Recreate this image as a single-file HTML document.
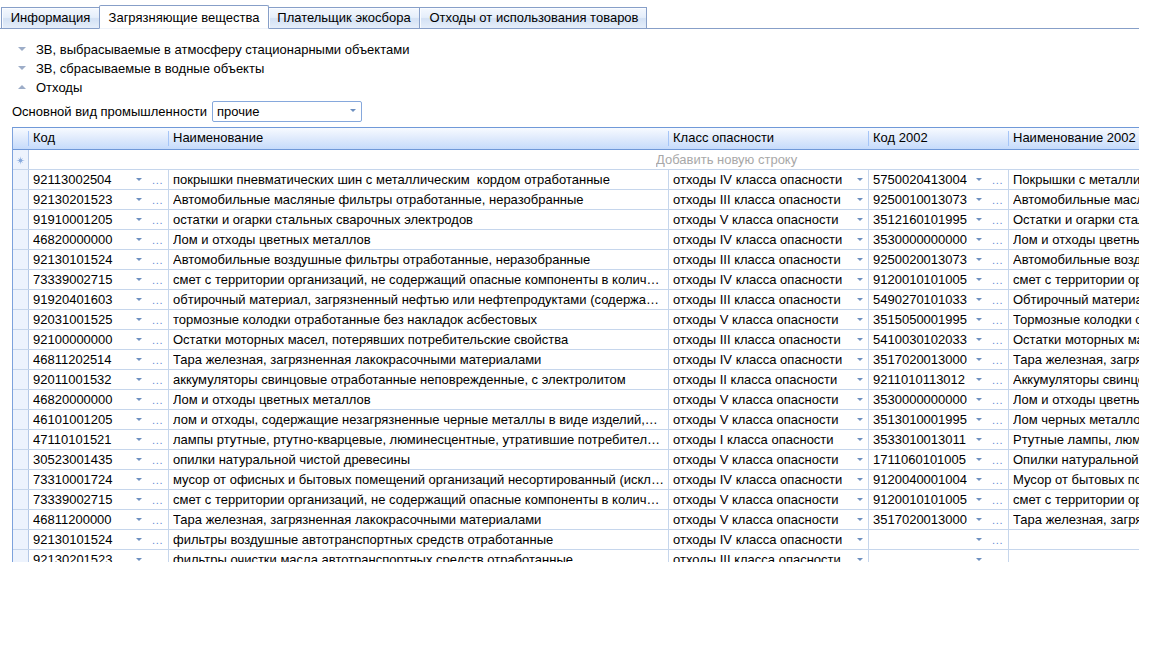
<!DOCTYPE html>
<html lang="ru"><head><meta charset="utf-8"><title>Загрязняющие вещества</title>
<style>
html,body{margin:0;padding:0;background:#fff;}
body{width:1152px;height:648px;overflow:hidden;position:relative;font-family:"Liberation Sans",Arial,sans-serif;font-size:12px;color:#000;}
.abs{position:absolute;}
.s{display:inline-block;line-height:15px;transform:scaleY(1.045);transform-origin:0 12px;}
#tabline{left:0px;top:28px;width:1139px;height:1px;background:#879fc8;}
.tab{position:absolute;top:7px;height:21px;box-sizing:border-box;border:1px solid #879fc8;border-bottom:none;background:linear-gradient(#f4f8fe 0%,#e5eefa 47%,#d3e1f4 53%,#e5eefa 100%);box-shadow:inset 1px 1px 0 #fafcff;line-height:19px;text-align:center;white-space:nowrap;font-size:13px;}
.tab.sel{box-shadow:none;top:5px;height:24px;background:#fff;line-height:24px;border-bottom:1px solid #eef2f9;border-radius:2px 2px 0 0;}
.exp{position:absolute;left:36px;white-space:nowrap;line-height:14px;font-size:13px;}
.tri{position:absolute;left:18px;width:0;height:0;border-left:4px solid transparent;border-right:4px solid transparent;}
.tri.dn{border-top:4px solid #9dadc8;}
.tri.up{border-bottom:4px solid #9dadc8;}
#lbl{left:12px;top:104px;line-height:14px;font-size:13px;white-space:nowrap;}
#combo{left:212px;top:101px;width:150px;height:21px;box-sizing:border-box;border:1px solid #86a8dc;border-radius:2px;background:#fff;line-height:19px;padding-left:4px;font-size:13px;}
#combo i{position:absolute;right:5px;top:7px;width:0;height:0;border-left:3px solid transparent;border-right:3px solid transparent;border-top:3px solid #6d8fc0;}
#grid{left:12px;top:127px;width:1127px;height:435px;overflow:hidden;border-left:1px solid #7da2dc;border-top:1px solid #7099d8;box-sizing:border-box;}
.hdr{position:relative;height:21px;background:linear-gradient(#f7faff 0%,#dfeafc 50%,#c5dbfb 100%);border-bottom:1px solid #6f98d8;font-size:13px;}
.hdr .h{position:absolute;top:-1px;height:21px;line-height:21px;white-space:nowrap;}
.hdr .sep{position:absolute;top:3px;height:15px;width:1px;background:#a5c5f7;}
.r{position:relative;height:20px;box-sizing:border-box;border-bottom:1px solid #c6d6ec;white-space:nowrap;}
.c{position:absolute;top:0;height:19px;box-sizing:border-box;border-right:1px solid #c6d6ec;overflow:hidden;line-height:19px;font-size:13px;}
.c0{left:0;width:16px;background:#edf3fd;border-right:1px solid #b4c8e6;}
.c1{left:16px;width:140px;}
.c2{left:156px;width:500px;}
.c3{left:656px;width:200px;}
.c4{left:856px;width:140px;}
.c5{left:996px;width:140px;border-right:none;}
.t{transform:scaleY(1.045);transform-origin:0 14px;position:absolute;left:4px;top:0;overflow:hidden;text-overflow:ellipsis;white-space:nowrap;}
.c1 .t{width:100px}
.c2 .t{width:494px;text-overflow:clip}
.c3 .t{width:180px}
.c4 .t{width:100px}
.c5 .t{width:200px;text-overflow:clip}
.a{position:absolute;top:8px;width:0;height:0;border-left:3px solid transparent;border-right:3px solid transparent;border-top:3px solid #6d8fc0;}
.c1 .a{left:107px}
.c3 .a{left:188px}
.c4 .a{left:107px}
.d{position:absolute;top:1px;font-weight:normal;color:#6489d2;font-size:11px;letter-spacing:.65px;}
.c1 .d{left:123px}
.c4 .d{left:123px}
.newrow{position:relative;height:20px;box-sizing:border-box;border-bottom:1px solid #c6d6ec;}
.newrow .c0{height:19px;color:#8aa4cf;font-size:11px;text-align:center;line-height:22px;}
.newrow .txt{position:absolute;left:643px;top:0;line-height:20px;color:#a8a8a8;font-size:13px;white-space:nowrap;}
</style></head><body>
<div class="abs" id="tabline"></div>
<div class="tab" style="left:1px;width:99px;"><span class="s">Информация</span></div>
<div class="tab" style="left:268px;width:152px;"><span class="s">Плательщик экосбора</span></div>
<div class="tab" style="left:419px;width:228px;padding-left:2px;"><span class="s">Отходы от использования товаров</span></div>
<div class="tab sel" style="left:99px;width:170px;"><span class="s">Загрязняющие вещества</span></div>

<div class="tri dn" style="top:47px;"></div><div class="exp" style="top:42px;"><span class="s">ЗВ, выбрасываемые в атмосферу стационарными объектами</span></div>
<div class="tri dn" style="top:66px;"></div><div class="exp" style="top:61px;"><span class="s">ЗВ, сбрасываемые в водные объекты</span></div>
<div class="tri up" style="top:85px;"></div><div class="exp" style="top:80px;"><span class="s">Отходы</span></div>

<div class="abs" id="lbl"><span class="s">Основной вид промышленности</span></div>
<div class="abs" id="combo"><span class="s">прочие</span><i></i></div>

<div class="abs" id="grid">
<div class="hdr">
<div class="sep" style="left:15px"></div><div class="h" style="left:20px"><span class="s">Код</span></div>
<div class="sep" style="left:155px"></div><div class="h" style="left:160px"><span class="s">Наименование</span></div>
<div class="sep" style="left:655px"></div><div class="h" style="left:660px"><span class="s">Класс опасности</span></div>
<div class="sep" style="left:855px"></div><div class="h" style="left:860px"><span class="s">Код 2002</span></div>
<div class="sep" style="left:995px"></div><div class="h" style="left:1000px"><span class="s">Наименование 2002</span></div>
</div>
<div class="newrow"><div class="c c0"><svg width="11" height="11" viewBox="0 0 11 11" style="position:absolute;left:2px;top:5px"><polygon fill="#86a8dc" points="5.50,1.20 5.98,4.35 7.90,3.10 6.65,5.02 9.80,5.50 6.65,5.98 7.90,7.90 5.98,6.65 5.50,9.80 5.02,6.65 3.10,7.90 4.35,5.98 1.20,5.50 4.35,5.02 3.10,3.10 5.02,4.35"/></svg></div><div class="txt"><span class="s">Добавить новую строку</span></div></div>
<div class="r"><div class="c c0"></div><div class="c c1"><span class="t">92113002504</span><i class="a"></i><b class="d">...</b></div><div class="c c2"><span class="t">покрышки пневматических шин с металлическим&nbsp; кордом отработанные</span></div><div class="c c3"><span class="t">отходы IV класса опасности</span><i class="a"></i></div><div class="c c4"><span class="t">5750020413004</span><i class="a"></i><b class="d">...</b></div><div class="c c5"><span class="t">Покрышки с металлическим кордом отработанные</span></div></div>
<div class="r"><div class="c c0"></div><div class="c c1"><span class="t">92130201523</span><i class="a"></i><b class="d">...</b></div><div class="c c2"><span class="t">Автомобильные масляные фильтры отработанные, неразобранные</span></div><div class="c c3"><span class="t">отходы III класса опасности</span><i class="a"></i></div><div class="c c4"><span class="t">9250010013073</span><i class="a"></i><b class="d">...</b></div><div class="c c5"><span class="t">Автомобильные масляные фильтры отработанные</span></div></div>
<div class="r"><div class="c c0"></div><div class="c c1"><span class="t">91910001205</span><i class="a"></i><b class="d">...</b></div><div class="c c2"><span class="t">остатки и огарки стальных сварочных электродов</span></div><div class="c c3"><span class="t">отходы V класса опасности</span><i class="a"></i></div><div class="c c4"><span class="t">3512160101995</span><i class="a"></i><b class="d">...</b></div><div class="c c5"><span class="t">Остатки и огарки стальных сварочных электродов</span></div></div>
<div class="r"><div class="c c0"></div><div class="c c1"><span class="t">46820000000</span><i class="a"></i><b class="d">...</b></div><div class="c c2"><span class="t">Лом и отходы цветных металлов</span></div><div class="c c3"><span class="t">отходы IV класса опасности</span><i class="a"></i></div><div class="c c4"><span class="t">3530000000000</span><i class="a"></i><b class="d">...</b></div><div class="c c5"><span class="t">Лом и отходы цветных металлов</span></div></div>
<div class="r"><div class="c c0"></div><div class="c c1"><span class="t">92130101524</span><i class="a"></i><b class="d">...</b></div><div class="c c2"><span class="t">Автомобильные воздушные фильтры отработанные, неразобранные</span></div><div class="c c3"><span class="t">отходы III класса опасности</span><i class="a"></i></div><div class="c c4"><span class="t">9250020013073</span><i class="a"></i><b class="d">...</b></div><div class="c c5"><span class="t">Автомобильные воздушные фильтры отработанные</span></div></div>
<div class="r"><div class="c c0"></div><div class="c c1"><span class="t">73339002715</span><i class="a"></i><b class="d">...</b></div><div class="c c2"><span class="t">смет с территории организаций, не содержащий опасные компоненты в колич…</span></div><div class="c c3"><span class="t">отходы IV класса опасности</span><i class="a"></i></div><div class="c c4"><span class="t">9120010101005</span><i class="a"></i><b class="d">...</b></div><div class="c c5"><span class="t">смет с территории организаций</span></div></div>
<div class="r"><div class="c c0"></div><div class="c c1"><span class="t">91920401603</span><i class="a"></i><b class="d">...</b></div><div class="c c2"><span class="t">обтирочный материал, загрязненный нефтью или нефтепродуктами (содержа…</span></div><div class="c c3"><span class="t">отходы III класса опасности</span><i class="a"></i></div><div class="c c4"><span class="t">5490270101033</span><i class="a"></i><b class="d">...</b></div><div class="c c5"><span class="t">Обтирочный материал, загрязненный маслами</span></div></div>
<div class="r"><div class="c c0"></div><div class="c c1"><span class="t">92031001525</span><i class="a"></i><b class="d">...</b></div><div class="c c2"><span class="t">тормозные колодки отработанные без накладок асбестовых</span></div><div class="c c3"><span class="t">отходы V класса опасности</span><i class="a"></i></div><div class="c c4"><span class="t">3515050001995</span><i class="a"></i><b class="d">...</b></div><div class="c c5"><span class="t">Тормозные колодки отработанные</span></div></div>
<div class="r"><div class="c c0"></div><div class="c c1"><span class="t">92100000000</span><i class="a"></i><b class="d">...</b></div><div class="c c2"><span class="t">Остатки моторных масел, потерявших потребительские свойства</span></div><div class="c c3"><span class="t">отходы III класса опасности</span><i class="a"></i></div><div class="c c4"><span class="t">5410030102033</span><i class="a"></i><b class="d">...</b></div><div class="c c5"><span class="t">Остатки моторных масел</span></div></div>
<div class="r"><div class="c c0"></div><div class="c c1"><span class="t">46811202514</span><i class="a"></i><b class="d">...</b></div><div class="c c2"><span class="t">Тара железная, загрязненная лакокрасочными материалами</span></div><div class="c c3"><span class="t">отходы IV класса опасности</span><i class="a"></i></div><div class="c c4"><span class="t">3517020013000</span><i class="a"></i><b class="d">...</b></div><div class="c c5"><span class="t">Тара железная, загрязненная</span></div></div>
<div class="r"><div class="c c0"></div><div class="c c1"><span class="t">92011001532</span><i class="a"></i><b class="d">...</b></div><div class="c c2"><span class="t">аккумуляторы свинцовые отработанные неповрежденные, с электролитом</span></div><div class="c c3"><span class="t">отходы II класса опасности</span><i class="a"></i></div><div class="c c4"><span class="t">9211010113012</span><i class="a"></i><b class="d">...</b></div><div class="c c5"><span class="t">Аккумуляторы свинцовые отработанные</span></div></div>
<div class="r"><div class="c c0"></div><div class="c c1"><span class="t">46820000000</span><i class="a"></i><b class="d">...</b></div><div class="c c2"><span class="t">Лом и отходы цветных металлов</span></div><div class="c c3"><span class="t">отходы V класса опасности</span><i class="a"></i></div><div class="c c4"><span class="t">3530000000000</span><i class="a"></i><b class="d">...</b></div><div class="c c5"><span class="t">Лом и отходы цветных металлов</span></div></div>
<div class="r"><div class="c c0"></div><div class="c c1"><span class="t">46101001205</span><i class="a"></i><b class="d">...</b></div><div class="c c2"><span class="t">лом и отходы, содержащие незагрязненные черные металлы в виде изделий,…</span></div><div class="c c3"><span class="t">отходы V класса опасности</span><i class="a"></i></div><div class="c c4"><span class="t">3513010001995</span><i class="a"></i><b class="d">...</b></div><div class="c c5"><span class="t">Лом черных металлов несортированный</span></div></div>
<div class="r"><div class="c c0"></div><div class="c c1"><span class="t">47110101521</span><i class="a"></i><b class="d">...</b></div><div class="c c2"><span class="t">лампы ртутные, ртутно-кварцевые, люминесцентные, утратившие потребител…</span></div><div class="c c3"><span class="t">отходы I класса опасности</span><i class="a"></i></div><div class="c c4"><span class="t">3533010013011</span><i class="a"></i><b class="d">...</b></div><div class="c c5"><span class="t">Ртутные лампы, люминесцентные</span></div></div>
<div class="r"><div class="c c0"></div><div class="c c1"><span class="t">30523001435</span><i class="a"></i><b class="d">...</b></div><div class="c c2"><span class="t">опилки натуральной чистой древесины</span></div><div class="c c3"><span class="t">отходы V класса опасности</span><i class="a"></i></div><div class="c c4"><span class="t">1711060101005</span><i class="a"></i><b class="d">...</b></div><div class="c c5"><span class="t">Опилки натуральной чистой древесины</span></div></div>
<div class="r"><div class="c c0"></div><div class="c c1"><span class="t">73310001724</span><i class="a"></i><b class="d">...</b></div><div class="c c2"><span class="t">мусор от офисных и бытовых помещений организаций несортированный (искл…</span></div><div class="c c3"><span class="t">отходы IV класса опасности</span><i class="a"></i></div><div class="c c4"><span class="t">9120040001004</span><i class="a"></i><b class="d">...</b></div><div class="c c5"><span class="t">Мусор от бытовых помещений организаций</span></div></div>
<div class="r"><div class="c c0"></div><div class="c c1"><span class="t">73339002715</span><i class="a"></i><b class="d">...</b></div><div class="c c2"><span class="t">смет с территории организаций, не содержащий опасные компоненты в колич…</span></div><div class="c c3"><span class="t">отходы V класса опасности</span><i class="a"></i></div><div class="c c4"><span class="t">9120010101005</span><i class="a"></i><b class="d">...</b></div><div class="c c5"><span class="t">смет с территории организаций</span></div></div>
<div class="r"><div class="c c0"></div><div class="c c1"><span class="t">46811200000</span><i class="a"></i><b class="d">...</b></div><div class="c c2"><span class="t">Тара железная, загрязненная лакокрасочными материалами</span></div><div class="c c3"><span class="t">отходы V класса опасности</span><i class="a"></i></div><div class="c c4"><span class="t">3517020013000</span><i class="a"></i><b class="d">...</b></div><div class="c c5"><span class="t">Тара железная, загрязненная</span></div></div>
<div class="r"><div class="c c0"></div><div class="c c1"><span class="t">92130101524</span><i class="a"></i><b class="d">...</b></div><div class="c c2"><span class="t">фильтры воздушные автотранспортных средств отработанные</span></div><div class="c c3"><span class="t">отходы IV класса опасности</span><i class="a"></i></div><div class="c c4"><span class="t"></span><i class="a"></i><b class="d">...</b></div><div class="c c5"><span class="t"></span></div></div>
<div class="r"><div class="c c0"></div><div class="c c1"><span class="t">92130201523</span><i class="a"></i><b class="d">...</b></div><div class="c c2"><span class="t">фильтры очистки масла автотранспортных средств отработанные</span></div><div class="c c3"><span class="t">отходы III класса опасности</span><i class="a"></i></div><div class="c c4"><span class="t"></span><i class="a"></i><b class="d">...</b></div><div class="c c5"><span class="t"></span></div></div>
</div>
</body></html>
